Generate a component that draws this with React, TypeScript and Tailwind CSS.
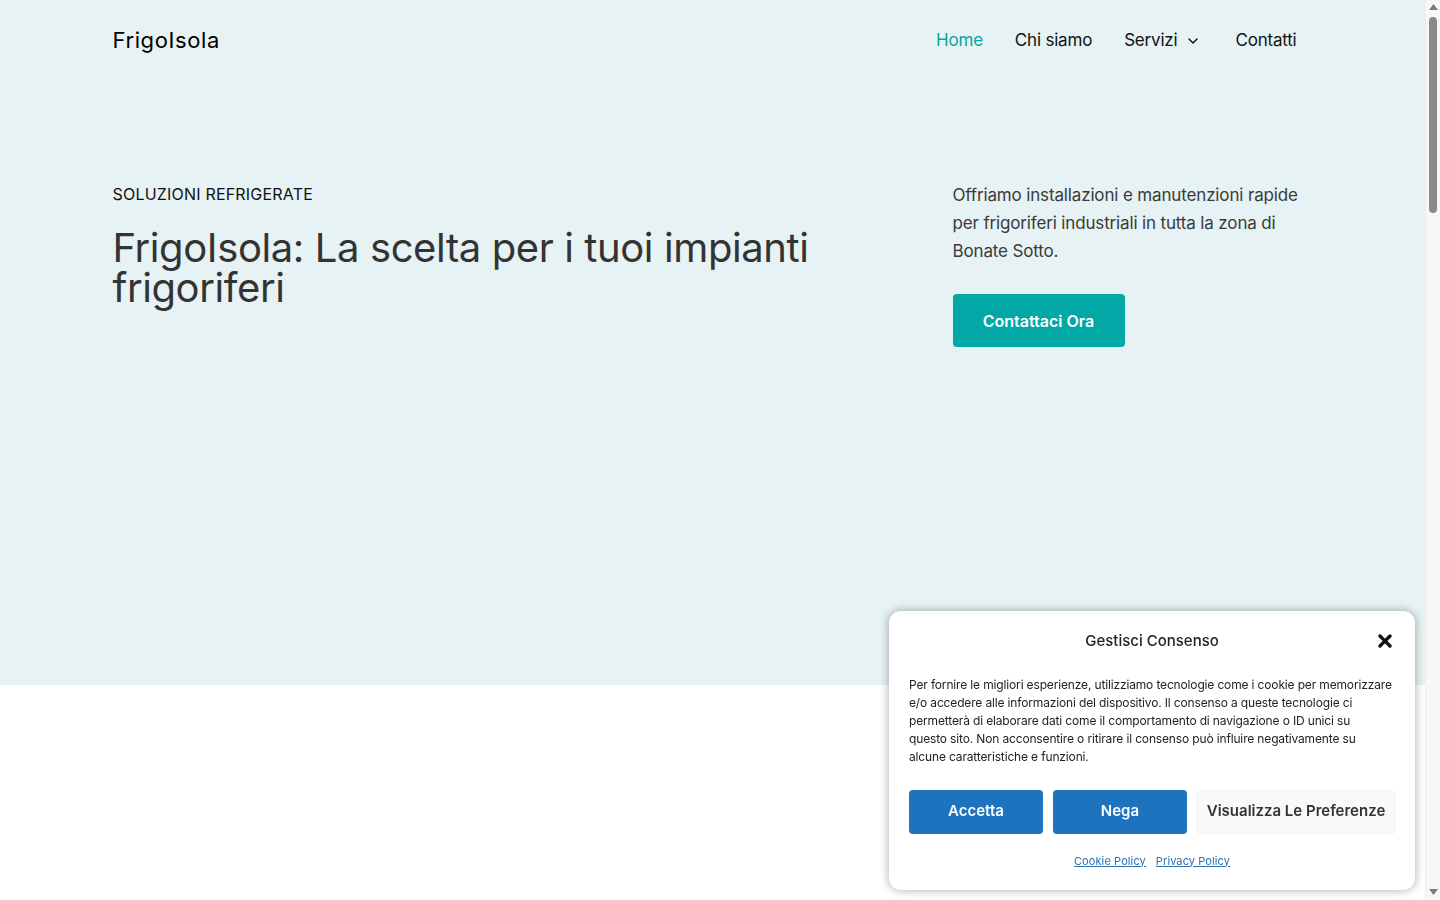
import { ChevronDown, X } from "lucide-react";

const font = { fontFamily: "Inter, 'Noto Sans', sans-serif" };

function Header() {
  return (
    <header className="mx-auto flex h-20 w-full max-w-[1200px] items-center justify-between">
      <a href="#" className="text-[22px] tracking-[0.6px] text-black">FrigoIsola</a>
      <nav className="flex items-center pt-[1px] text-[17px] tracking-[-0.2px]">
        <a href="#" className="px-4 text-[#0aa5a3]">Home</a>
        <a href="#" className="px-4 text-[#111]">Chi siamo</a>
        <a href="#" className="flex items-center gap-[8px] px-4 text-[#111]">
          Servizi
          <ChevronDown className="h-4 w-4" strokeWidth={2.2} />
        </a>
        <a href="#" className="pl-[18px] pr-4 text-[#111]">Contatti</a>
      </nav>
    </header>
  );
}

function Hero() {
  return (
    <section className="mx-auto grid w-full max-w-[1200px] grid-cols-[1fr_360px] gap-[120px] pt-[102px]">
      <div>
        <p className="text-[16px] uppercase leading-[24px] tracking-[0.2px] text-[#111]">Soluzioni Refrigerate</p>
        <h1 className="mt-[22px] text-[40px] leading-[40px] tracking-[-0.4px] text-[#333]">
          FrigoIsola: La scelta per i tuoi impianti frigoriferi
        </h1>
      </div>
      <div>
        <p className="mt-[-1px] text-[17px] leading-[28px] tracking-[-0.15px] text-[#3a3a3a]">
          Offriamo installazioni e manutenzioni rapide per frigoriferi industriali in tutta la zona di Bonate Sotto.
        </p>
        <a
          href="#"
          className="mt-[29px] inline-flex h-[53px] w-[172px] items-center justify-center rounded-[4px] bg-[#02a8a5] text-[16px] font-semibold text-white"
        >
          Contattaci Ora
        </a>
      </div>
    </section>
  );
}

function CookieBanner() {
  return (
    <div className="fixed bottom-[10px] right-[25px] w-[526px] rounded-[12px] bg-white px-5 pb-[21px] pt-[21px] shadow-[0_0_10px_rgba(0,0,0,0.35)]">
      <div className="relative flex h-[20px] items-center justify-center">
        <h2 className="text-[15px] font-medium text-[#222]">Gestisci Consenso</h2>
        <button className="absolute right-0 top-[-1px] text-[#111]">
          <X className="h-[20px] w-[20px]" strokeWidth={4} />
        </button>
      </div>
      <p className="mt-[24px] text-[12px] leading-[18px] tracking-[-0.15px] text-[#222]">
        Per fornire le migliori esperienze, utilizziamo tecnologie come i cookie per memorizzare
        <br />
        e/o accedere alle informazioni del dispositivo. Il consenso a queste tecnologie ci
        <br />
        permetterà di elaborare dati come il comportamento di navigazione o ID unici su
        <br />
        questo sito. Non acconsentire o ritirare il consenso può influire negativamente su
        <br />
        alcune caratteristiche e funzioni.
      </p>
      <div className="mt-[24px] flex gap-[10px]">
        <button className="h-[44px] w-[134px] rounded-[4px] bg-[#1e73be] text-[15px] font-semibold text-white">
          Accetta
        </button>
        <button className="h-[44px] w-[134px] rounded-[4px] bg-[#1e73be] text-[15px] font-semibold text-white">
          Nega
        </button>
        <button className="h-[44px] flex-1 rounded-[4px] border border-[#f2f2f2] bg-[#f9f9f9] text-[15px] font-semibold text-[#333]">
          Visualizza Le Preferenze
        </button>
      </div>
      <div className="mt-[19px] flex justify-center gap-[10px] text-[11px] tracking-[0.1px] text-[#2a6fb0]">
        <a href="#" className="underline">Cookie Policy</a>
        <a href="#" className="underline">Privacy Policy</a>
      </div>
    </div>
  );
}

// classic window scrollbar on the right edge
function Scrollbar() {
  return (
    <div className="fixed right-0 top-0 flex h-screen w-[15px] flex-col items-center border-l border-[#ededed] bg-[#f7f7f7]">
      <svg width="9" height="6" viewBox="0 0 9 6" className="mt-[4px]">
        <path d="M4.5 0 L9 6 L0 6 Z" fill="#7a7a7a" />
      </svg>
      <div className="mt-[7px] h-[196px] w-[8px] rounded-full bg-[#8a8a8a]" />
      <div className="flex-1" />
      <svg width="9" height="6" viewBox="0 0 9 6" className="mb-[5px]">
        <path d="M0 0 L9 0 L4.5 6 Z" fill="#7a7a7a" />
      </svg>
    </div>
  );
}

export default function App() {
  return (
    <div style={font} className="min-h-[4170px] bg-white">
      <div className="mr-[15px]">
        <div className="h-[685px] bg-[#e6f2f3]">
          <Header />
          <Hero />
        </div>
      </div>
      <CookieBanner />
      <Scrollbar />
    </div>
  );
}
